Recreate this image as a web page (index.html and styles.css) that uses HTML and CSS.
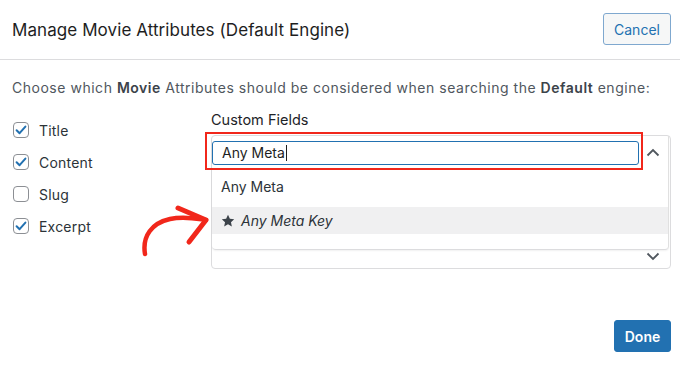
FILE: index.html
```html
<!DOCTYPE html>
<html>
<head>
<meta charset="utf-8">
<link rel="stylesheet" href="styles.css">
</head>
<body>
<div class="modal">
  <header class="head">
    <h1 class="title">Manage Movie Attributes (Default Engine)</h1>
    <button class="btn-cancel">Cancel</button>
  </header>
  <div class="body">
    <p class="desc">Choose which <b>Movie</b> Attributes should be considered when searching the <b>Default</b> engine:</p>
    <div class="cols">
      <ul class="checks">
        <li class="check"><span class="box on"><svg viewBox="0 0 16 16" width="16" height="16"><path d="M3.6 8.2 L6.6 11.2 L12.4 4.6" fill="none" stroke="#2271b1" stroke-width="2" stroke-linecap="round" stroke-linejoin="round"/></svg></span>Title</li>
        <li class="check"><span class="box on"><svg viewBox="0 0 16 16" width="16" height="16"><path d="M3.6 8.2 L6.6 11.2 L12.4 4.6" fill="none" stroke="#2271b1" stroke-width="2" stroke-linecap="round" stroke-linejoin="round"/></svg></span>Content</li>
        <li class="check"><span class="box"></span>Slug</li>
        <li class="check"><span class="box on"><svg viewBox="0 0 16 16" width="16" height="16"><path d="M3.6 8.2 L6.6 11.2 L12.4 4.6" fill="none" stroke="#2271b1" stroke-width="2" stroke-linecap="round" stroke-linejoin="round"/></svg></span>Excerpt</li>
      </ul>
      <div class="fields">
        <div class="label">Custom Fields</div>
        <div class="select">
          <div class="panel">
            <div class="search-row">
              <div class="input">Any Meta<span class="caret"></span></div>
              <svg class="chev" width="14" height="9" viewBox="0 0 14 9"><path d="M1.5 7.5 L7 2 L12.5 7.5" fill="none" stroke="#50575e" stroke-width="1.8"/></svg>
            </div>
            <div class="opt first">Any Meta</div>
            <div class="opt hi"><svg class="star" width="14" height="14" viewBox="0 0 24 24"><path d="M12 1.2 L15.2 8 L22.6 8.9 L17.1 14 L18.6 21.4 L12 17.7 L5.4 21.4 L6.9 14 L1.4 8.9 L8.8 8 Z" fill="#3c434a"/></svg><i>Any Meta Key</i></div>
            <div class="opt empty"></div>
          </div>
          <div class="bottom-row">
            <svg class="chev" width="14" height="9" viewBox="0 0 14 9"><path d="M1.5 1.5 L7 7 L12.5 1.5" fill="none" stroke="#50575e" stroke-width="1.8"/></svg>
          </div>
          <div class="highlight"></div>
        </div>
      </div>
    </div>
    <div class="foot">
      <button class="btn-done">Done</button>
    </div>
  </div>
  <svg class="arrow" width="90" height="70" viewBox="0 0 90 70">
    <path d="M15 63 C12 45 22 32 40 28 C55 25 68 28 76 29" fill="none" stroke="#f1271b" stroke-width="4.5" stroke-linecap="round"/>
    <path d="M48 17 L76 29 L59 51" fill="none" stroke="#f1271b" stroke-width="5" stroke-linecap="round" stroke-linejoin="round"/>
  </svg>
</div>
</body>
</html>
```
FILE: styles.css
```css
* { box-sizing: border-box; }
html, body { margin: 0; padding: 0; background: #fff; }
body {
  font-family: Inter, "Liberation Sans", Arial, sans-serif;
  color: #1e1e1e;
  width: 680px;
  height: 367px;
  overflow: hidden;
}
.modal { position: relative; width: 680px; height: 367px; }
.head {
  display: flex;
  align-items: center;
  justify-content: space-between;
  height: 60px;
  padding: 0 9px 0 12px;
  border-bottom: 1px solid #dcdcde;
}
.title {
  margin: 0;
  font-size: 17px;
  font-weight: 400;
  color: #1e1e1e;
  letter-spacing: 0.08px;
}
.btn-cancel {
  font-family: inherit;
  font-size: 14px;
  color: #2271b1;
  background: #f6f7f7;
  border: 1px solid #7fa8cf;
  border-radius: 3px;
  width: 68px;
  height: 32px;
  padding: 0;
  margin-top: -1px;
}
.body { padding: 0 9px 0 12px; }
.desc {
  margin: 19px 0 0;
  font-size: 14px;
  line-height: 18px;
  color: #50575e;
  letter-spacing: 0.52px;
}
.desc b { font-weight: 600; color: #3c434a; }
.cols { display: flex; margin-top: 14px; }
.checks {
  list-style: none;
  margin: 0;
  padding: 0;
  width: 199px;
  padding-top: 3px;
}
.check {
  display: flex;
  align-items: center;
  height: 32px;
  font-size: 14px;
  color: #2c3338;
  letter-spacing: 0.2px;
}
.box {
  width: 16px;
  height: 16px;
  border: 1px solid #8c8f94;
  border-radius: 4px;
  margin: 0 10px 0 1px;
  display: flex;
  align-items: center;
  justify-content: center;
  background: #fff;
}
.box svg { display: block; margin: -1px; }
.fields { flex: 1; }
.label {
  font-size: 14.5px;
  line-height: 18px;
  color: #1d2327;
  margin-bottom: 6px;
}
.select {
  position: relative;
  border: 1px solid #dcdcde;
  border-radius: 4px;
  height: 134px;
}
.panel {
  border-bottom: 1px solid #dcdcde;
  border-right: 1px solid #e0e0e0;
  border-radius: 0 0 4px 4px;
  margin-right: 1px;
  box-shadow: 0 1px 2px rgba(0,0,0,0.06);
}
.search-row {
  display: flex;
  align-items: center;
  padding: 4px 0 0 0;
  height: 30px;
}
.input {
  width: 427px;
  height: 24px;
  border: 1px solid #2271b1;
  border-radius: 3px;
  font-size: 14px;
  line-height: 22px;
  padding-left: 9px;
  color: #1e1e1e;
  display: flex;
  align-items: center;
}
.caret {
  display: inline-block;
  width: 1px;
  height: 16px;
  background: #1e1e1e;
  margin-left: 1px;
}
.search-row .chev { margin-left: 7px; margin-top: -2px; }
.opt {
  height: 26px;
  display: flex;
  align-items: center;
  padding-left: 9px;
  font-size: 14px;
  color: #2c3338;
}
.opt.first { height: 34px; padding-top: 6px; margin-bottom: 7px; }
.opt.hi { background: #f0f0f1; height: 27px; padding-left: 9px; }
.opt.hi i { font-style: italic; }
.star { margin-right: 6px; }
.opt.empty { height: 15px; }
.bottom-row {
  display: flex;
  justify-content: flex-end;
  padding: 0 10px 0 0;
  margin-top: 2px;
}
.highlight {
  position: absolute;
  left: -7px;
  top: -4px;
  width: 438px;
  height: 38px;
  border: 2.5px solid #f1271b;
}
.foot {
  display: flex;
  justify-content: flex-end;
  margin-top: 51px;
}
.btn-done {
  font-family: inherit;
  font-size: 14px;
  font-weight: 600;
  color: #fff;
  background: #2271b1;
  border: 1px solid #2271b1;
  border-radius: 3px;
  width: 57px;
  height: 32px;
  padding: 0;
}
.arrow {
  position: absolute;
  left: 130px;
  top: 191px;
}
```
